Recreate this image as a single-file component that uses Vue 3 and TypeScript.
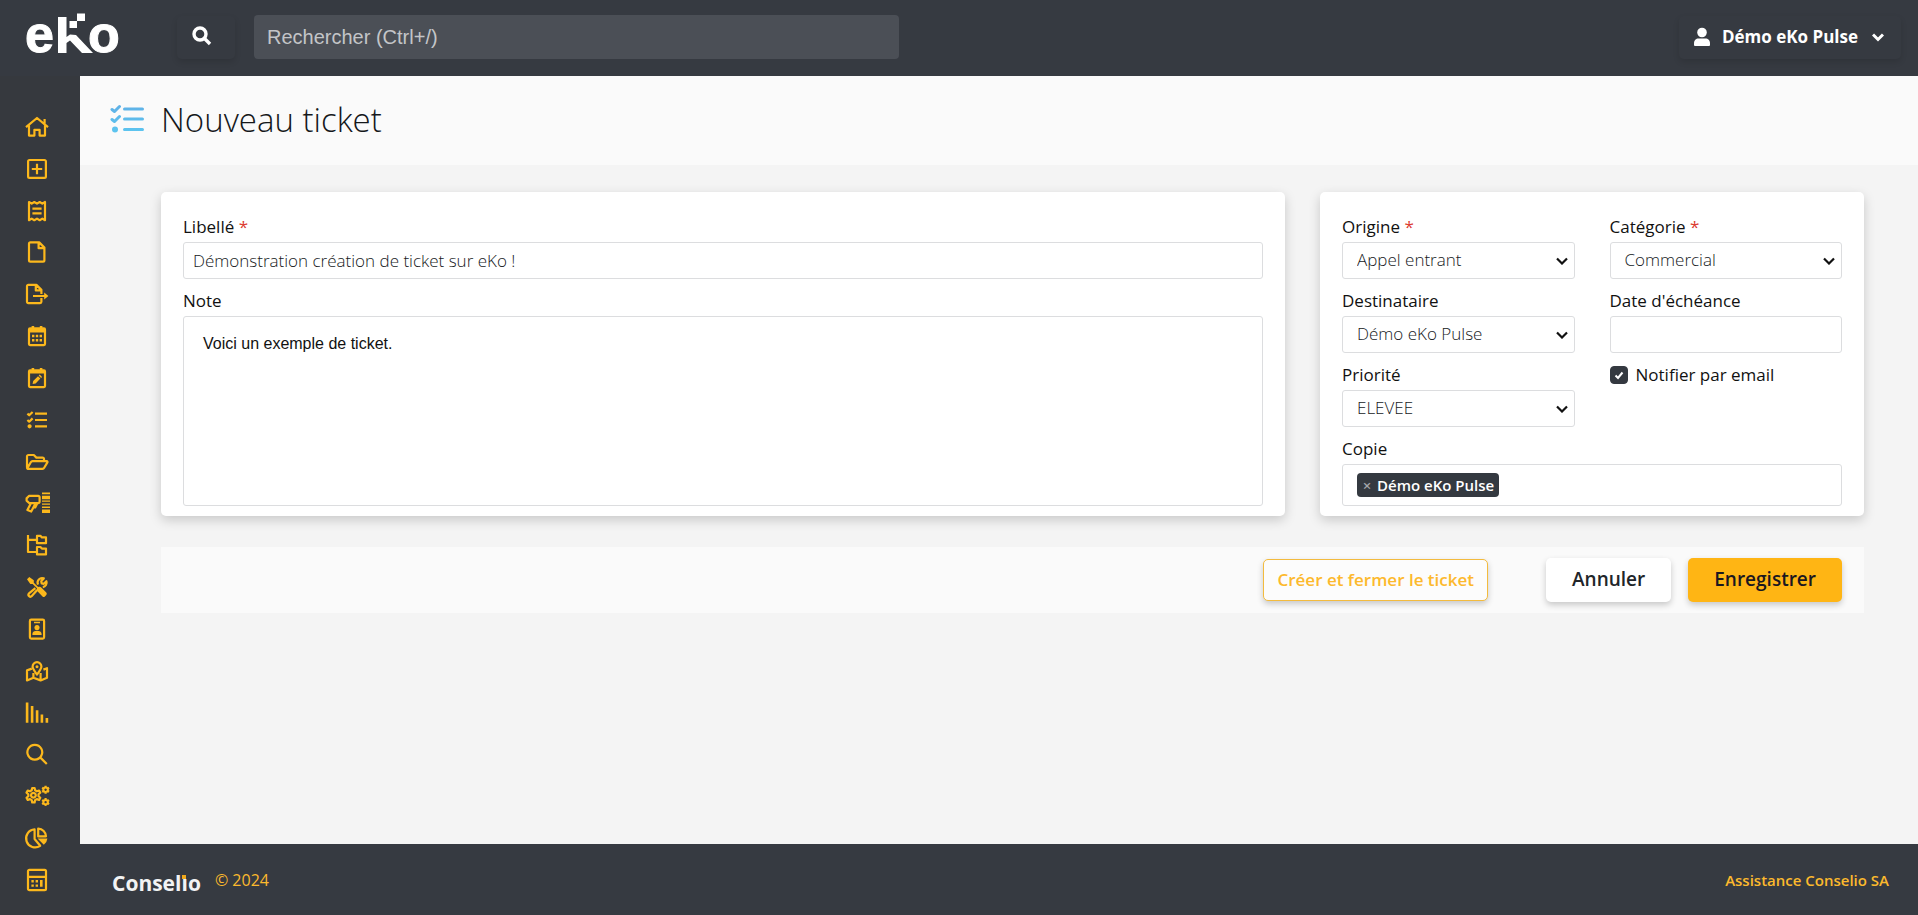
<script setup lang="ts">
import { ref } from 'vue'

interface NavItem {
  name: string
  stroke?: string
  fill?: string
}

const nav: NavItem[] = [
  { name: 'Accueil', stroke: 'M1 12.2 12 3l11 9.2M4 10.5V20.6h5.4v-5.8h5.2v5.8H20V10.5M19.6 4v4.4' },
  { name: 'Ajouter', stroke: 'M4.5 3h15a1.4 1.4 0 0 1 1.4 1.4v15a1.4 1.4 0 0 1-1.4 1.4h-15a1.4 1.4 0 0 1-1.4-1.4v-15A1.4 1.4 0 0 1 4.5 3ZM12 6.8v10.4M6.8 12h10.4' },
  { name: 'Reçus', stroke: 'M4 3l2.7 1.6L9.3 3 12 4.6 14.7 3l2.6 1.6L20 3v18.2l-2.7-1.6-2.6 1.6-2.7-1.6-2.7 1.6-2.6-1.6L4 21.2ZM7.4 9.6h9.2M7.4 14.4h9.2' },
  { name: 'Documents', stroke: 'M5.4 2.4h8.8L19.4 7.6v12.6a1.4 1.4 0 0 1-1.4 1.4H5.4A1.4 1.4 0 0 1 4 20.2V3.8a1.4 1.4 0 0 1 1.4-1.4ZM13.6 2.6v5.6h5.6' },
  { name: 'Exports', stroke: 'M16.4 16v3.8a1.3 1.3 0 0 1-1.3 1.3H3.3A1.3 1.3 0 0 1 2 19.8V4.2a1.3 1.3 0 0 1 1.3-1.3h8.1l5 5V12M10.8 3v5.4h5.4M8 14h12', fill: 'M19.2 10.4 23.4 14l-4.2 3.6Z' },
  { name: 'Calendrier', stroke: 'M5 4.4h14a1 1 0 0 1 1 1v14.7a1 1 0 0 1-1 1H5a1 1 0 0 1-1-1V5.4a1 1 0 0 1 1-1Z', fill: 'M4 4.6h16v4H4ZM6.6 2h2.6v3H6.6ZM14.8 2h2.6v3h-2.6ZM7 10.8h2.4v2.4H7ZM10.8 10.8h2.4v2.4h-2.4ZM14.6 10.8H17v2.4h-2.4ZM7 15h2.4v2.4H7ZM10.8 15h2.4v2.4h-2.4ZM14.6 15H17v2.4h-2.4Z' },
  { name: 'Planification', stroke: 'M5 4.4h14a1 1 0 0 1 1 1v14.7a1 1 0 0 1-1 1H5a1 1 0 0 1-1-1V5.4a1 1 0 0 1 1-1Z', fill: 'M4 4.6h16v3H4ZM6.6 2h2.6v3H6.6ZM14.8 2h2.6v3h-2.6ZM7.6 18l.6-3 4.8-4.8 2.4 2.4-4.8 4.8ZM13.7 9.5l1-1 2.4 2.4-1 1Z' },
  { name: 'Tickets', stroke: 'M2.4 5.6l1.8 1.7L7.6 4M2.4 12l1.8 1.7L7.6 10.4M10 5.7h12M10 12h12M10 18.3h12', fill: 'M4.6 16.2a2.1 2.1 0 1 0 .001 0Z' },
  { name: 'Dossiers', stroke: 'M2 17.4V6.4A1.4 1.4 0 0 1 3.4 5h5.4l2.6 2.6h6.2A1.4 1.4 0 0 1 19 9v2.2M2.2 18.4l3.6-6.2a2 2 0 0 1 1.7-1h14.2a.8.8 0 0 1 .7 1.2l-3.2 5.4a2 2 0 0 1-1.7 1H2.8a.7.7 0 0 1-.6-1Z' },
  { name: 'Inventaire', stroke: 'M4.2 4.8h9a1.4 1.4 0 0 1 1.4 1.4v4.6a1.4 1.4 0 0 1-1.4 1.4H4.4L1.6 9.6V7.4ZM5.8 12.4 2.4 19l3.8 1.6 4.2-8M8.6 16.4h1.6l2-4', fill: 'M17 1.6h8v1.6h-8ZM17 4.8h8v3.4h-8ZM17 9.6h8v1.2h-8ZM17 12.6h8v1.2h-8ZM17 15.6h8v1.4h-8ZM17 18.4h8v3.6h-8Z' },
  { name: 'Arborescence', stroke: 'M3 2v17h8M3 6.8h8M12 2.8h3.4l1.5 1.6h4.1v5.8h-9ZM12 14h3.4l1.5 1.6h4.1v5.8h-9Z' },
  { name: 'Outils', stroke: 'M10.4 13.2 4 18.4a1.9 1.9 0 0 0 2.8 2.6l5.4-6M13 9.6a4.6 4.6 0 0 1 5.8-6.2l-2.6 2.8.5 2.2 2.1.4 2.6-2.6a4.6 4.6 0 0 1-3.6 6', fill: 'M2 4.2 4.3 2l4.5 3.3v2.4l4.4 4.4c1.4-.6 2.4-.2 3.3.7l4.8 4.8a1.8 1.8 0 0 1 0 2.4l-1.4 1.4a1.8 1.8 0 0 1-2.4 0l-4.8-4.8c-.9-.9-1.3-2-.7-3.3L7.6 8.9H5.3Z' },
  { name: 'Contacts', stroke: 'M6.2 2.6h11.6a1.3 1.3 0 0 1 1.3 1.3v16.4a1.3 1.3 0 0 1-1.3 1.3H6.2a1.3 1.3 0 0 1-1.3-1.3V3.9a1.3 1.3 0 0 1 1.3-1.3Z', fill: 'M9 4.8h6v1.4H9ZM12 8a2.6 2.6 0 1 0 .001 0ZM7.4 18v-1c0-2 1.6-3 3-3h3.2c1.4 0 3 1 3 3v1Z' },
  { name: 'Carte', stroke: 'M12 15.6C9 11.8 7.6 9.9 7.6 7.6a4.4 4.4 0 1 1 8.8 0c0 2.3-1.4 4.2-4.4 8ZM6.8 9.6 2 11.4v10l6.4-2.6 7.2 2.6 6.4-2.6V9.2l-3.6 1.4M8.4 14v4.8M15.6 14v7.4', fill: 'M12 6.2a1.5 1.5 0 1 0 .001 0Z' },
  { name: 'Statistiques', fill: 'M.8 1.4h2.6v20.4H.8ZM5.8 5h2.6v16.8H5.8ZM10.8 9.2h2.6v12.6h-2.6ZM15.6 13.4h2.6v8.4h-2.6ZM20.6 17h2.6v4.8h-2.6Z' },
  { name: 'Recherche', stroke: 'M9.8 2.8a7.4 7.4 0 1 0 .001 0ZM15.2 15.4 21.8 22' },
  { name: 'Paramètres', stroke: 'M7.2 4h2.4l.5 2.3 1.7 1 2.3-.8 1.2 2.1-1.8 1.6v2l1.8 1.6-1.2 2.1-2.3-.8-1.7 1-.5 2.3H7.2l-.5-2.3-1.7-1-2.3.8-1.2-2.1 1.8-1.6v-2L1.5 8.6l1.2-2.1 2.3.8 1.7-1ZM8.4 8.8a2.4 2.4 0 1 0 .001 0ZM20.6 3.4a2.3 2.3 0 1 0 .001 0ZM20.6 15.8a2.3 2.3 0 1 0 .001 0ZM20.6 1.7v1.4M20.6 8.3v1.4M24.1 3.7l-1.2.7M17.1 3.7l1.2.7M24.1 7.7l-1.2-.7M17.1 7.7l1.2-.7M20.6 14.1v1.4M20.6 20.7v1.4M24.1 16.1l-1.2.7M17.1 16.1l1.2.7M24.1 20.1l-1.2-.7M17.1 20.1l1.2-.7' },
  { name: 'Rapports', stroke: 'M9.6 3.4a9 9 0 1 0 5.6 16.4L9.6 13ZM13.2 2.6a8 8 0 0 1 7.8 7.8h-7.8Z', fill: 'M12.6 12.4h9.8a9 9 0 0 1-3.6 6.4Z' },
  { name: 'Calculatrice', stroke: 'M4.4 1.8h15.2A1.4 1.4 0 0 1 21 3.2v17.6a1.4 1.4 0 0 1-1.4 1.4H4.4A1.4 1.4 0 0 1 3 20.8V3.2a1.4 1.4 0 0 1 1.4-1.4ZM3 8.8h18', fill: 'M6.4 12h2.4v2.4H6.4ZM10.6 12H13v2.4h-2.4ZM6.4 16.4h2.4v2.4H6.4ZM10.6 16.4H13v2.4h-2.4ZM15 12h2.6v6.8H15Z' },
]

const search = ref('')
const label = ref('Démonstration création de ticket sur eKo !')
const note = ref('Voici un exemple de ticket.')
const origin = ref('Appel entrant')
const category = ref('Commercial')
const recipient = ref('Démo eKo Pulse')
const dueDate = ref('')
const priority = ref('ELEVEE')
const notify = ref(true)
const copies = ref<string[]>(['Démo eKo Pulse'])

function removeCopy(name: string) {
  copies.value = copies.value.filter((c) => c !== name)
}
</script>

<template>
  <div class="app">
    <header class="topbar">
      <a href="#" class="brand" aria-label="eKo">
        <svg class="brand-logo" viewBox="0 -7 98 60" aria-hidden="true">
          <text class="brand-letter" x="0" y="40">e</text>
          <path d="M33 5h8.500v20l3.500-2.500 6 .5 17 18H57L45 28.500 41.500 31v10H33Z" />
          <path d="M44.500 9H52v7h-7.500ZM52 1.500h8V9h-8Z" />
          <text class="brand-letter" x="63" y="40">o</text>
        </svg>
      </a>
      <button type="button" class="search-toggle" aria-label="Rechercher">
        <svg viewBox="0 0 20 20" class="icon-search"><circle cx="8" cy="8" r="6" /><path d="M12.500 12.500 18 18" /></svg>
      </button>
      <input v-model="search" class="search" type="search" placeholder="Rechercher (Ctrl+/)" aria-label="Recherche" />
      <button type="button" class="user">
        <svg viewBox="0 0 16 20" class="icon-user"><circle cx="8" cy="5.500" r="4.800" /><path d="M0 18v-1.500C0 13 2 11.500 4.500 11.500h7c2.500 0 4.500 1.500 4.500 5V18a1 1 0 0 1-1 1H1a1 1 0 0 1-1-1Z" /></svg>
        <span>Démo eKo Pulse</span>
        <svg viewBox="0 0 12 10" class="icon-chevron"><path d="M1 2.500 6 7.500l5-5" /></svg>
      </button>
    </header>

    <div class="body">
      <nav class="sidebar" aria-label="Navigation principale">
        <a v-for="item in nav" :key="item.name" href="#" class="nav-link" :aria-label="item.name">
          <svg viewBox="0 0 24 24" class="nav-icon">
            <path v-if="item.stroke" class="line" :d="item.stroke" />
            <path v-if="item.fill" class="solid" :d="item.fill" />
          </svg>
        </a>
      </nav>

      <div class="page">
        <div class="titlebar">
          <svg viewBox="0 0 34 30" class="title-icon">
            <defs>
              <linearGradient id="title-gradient" gradientUnits="userSpaceOnUse" x1="0" y1="0" x2="0" y2="30">
                <stop offset="0" stop-color="#5fb0e6" />
                <stop offset="1" stop-color="#5cc6f0" />
              </linearGradient>
            </defs>
            <g fill="none" stroke="url(#title-gradient)" stroke-width="3" stroke-linecap="round" stroke-linejoin="round">
              <path d="M2 5.500 4.500 7.500 9.500 2.500M2 15.500 4.500 17.500 9.500 12.500M14.500 5h18M14.500 15h18M14.500 25.500h18" />
            </g>
            <circle cx="5" cy="25.500" r="3" fill="url(#title-gradient)" />
          </svg>
          <h1>Nouveau ticket</h1>
        </div>

        <form class="content" @submit.prevent>
          <div class="cards">
            <section class="card main-card">
              <div class="field">
                <label for="label">Libellé <span class="required">*</span></label>
                <input id="label" v-model="label" class="control" type="text" required />
              </div>
              <div class="field grow">
                <label for="note">Note</label>
                <textarea id="note" v-model="note" class="control note"></textarea>
              </div>
            </section>

            <section class="card side-card">
              <div class="field">
                <label for="origin">Origine <span class="required">*</span></label>
                <select id="origin" v-model="origin" class="control"><option>Appel entrant</option></select>
              </div>
              <div class="field">
                <label for="category">Catégorie <span class="required">*</span></label>
                <select id="category" v-model="category" class="control"><option>Commercial</option></select>
              </div>
              <div class="field">
                <label for="recipient">Destinataire</label>
                <select id="recipient" v-model="recipient" class="control"><option>Démo eKo Pulse</option></select>
              </div>
              <div class="field">
                <label for="due">Date d'échéance</label>
                <input id="due" v-model="dueDate" class="control" type="text" />
              </div>
              <div class="field">
                <label for="priority">Priorité</label>
                <select id="priority" v-model="priority" class="control"><option>ELEVEE</option></select>
              </div>
              <div class="check">
                <span class="box">
                  <input id="notify" v-model="notify" type="checkbox" />
                  <svg v-if="notify" viewBox="0 0 18 18"><path d="M5.500 9.500 8 12l4.500-5.500" /></svg>
                </span>
                <label for="notify">Notifier par email</label>
              </div>
              <div class="field wide">
                <label for="copy">Copie</label>
                <div class="control tags">
                  <span v-for="c in copies" :key="c" class="tag">
                    <button type="button" :aria-label="'Retirer ' + c" @click="removeCopy(c)">×</button>{{ c }}
                  </span>
                  <input id="copy" type="text" />
                </div>
              </div>
            </section>
          </div>

          <div class="actions">
            <button type="button" class="btn outline">Créer et fermer le ticket</button>
            <button type="button" class="btn plain">Annuler</button>
            <button type="submit" class="btn primary">Enregistrer</button>
          </div>
        </form>

        <footer class="footer">
          <span class="conselio">Consel<span class="dotted">ı</span>o</span>
          <span class="year">© 2024</span>
          <a href="#">Assistance Conselio SA</a>
        </footer>
      </div>
    </div>
  </div>
</template>

<style>
body {
  margin: 0;
  background: #f4f4f4;
}
</style>

<style scoped>
* {
  box-sizing: border-box;
}
.app {
  min-height: 100vh;
  display: flex;
  flex-direction: column;
  font-family: 'Open Sans', 'Noto Sans', sans-serif;
  font-size: 17px;
  line-height: 24px;
  color: #212529;
}
button,
input,
select,
textarea {
  font: inherit;
  color: inherit;
}
button {
  cursor: pointer;
}
.topbar {
  display: flex;
  align-items: center;
  height: 76px;
  padding: 0 17px 2px 25px;
  background: #363a41;
}
.brand {
  display: flex;
  width: 152px;
}
.brand-logo {
  width: 98px;
  height: 60px;
  margin-bottom: 4px;
  fill: #fff;
}
.brand-letter {
  font: bold 52px 'Liberation Sans', Arial, sans-serif;
  stroke: #fff;
  stroke-width: 1;
}
.search-toggle,
.user {
  display: flex;
  align-items: center;
  height: 43px;
  border: 0;
  border-radius: 5px;
  background: transparent;
  color: #fff;
  box-shadow: 0 3px 6px rgba(0, 0, 0, 0.12);
}
.search-toggle {
  width: 58px;
  padding: 0 0 2px 15px;
}
.icon-search {
  width: 20px;
  height: 20px;
  fill: none;
  stroke: #fff;
  stroke-width: 3.4;
}
.search {
  width: 645px;
  height: 44px;
  margin-left: 19px;
  padding: 0 13px;
  border: 0;
  border-radius: 4px;
  background: #4b4f56;
  color: #fff;
  font: 20px 'Liberation Sans', Arial, sans-serif;
}
.search::placeholder {
  color: #c3c5c8;
}
.user {
  margin-left: auto;
  padding: 0 17px 0 15px;
  font-weight: 700;
}
.icon-user {
  width: 16px;
  height: 20px;
  margin-right: 12px;
  fill: #fff;
}
.icon-chevron {
  width: 12px;
  height: 10px;
  margin-left: 14px;
  fill: none;
  stroke: #fff;
  stroke-width: 3;
}
.body {
  flex: 1;
  display: flex;
}
.sidebar {
  display: flex;
  flex-direction: column;
  justify-content: space-between;
  width: 80px;
  padding: 31px 6px 15px 0;
  background: #36393e;
}
.nav-link {
  display: flex;
  align-items: center;
  justify-content: center;
  height: 40px;
}
.nav-icon {
  width: 24px;
  height: 24px;
  overflow: visible;
}
.line {
  fill: none;
  stroke: #fcb81c;
  stroke-width: 2.2;
  stroke-linejoin: round;
}
.solid {
  fill: #fcb81c;
}
.page {
  flex: 1;
  min-width: 0;
  display: flex;
  flex-direction: column;
  background: #f4f4f4;
}
.titlebar {
  display: flex;
  align-items: center;
  gap: 17px;
  height: 89px;
  padding: 0 30px 2px;
  background: #fafafa;
}
.title-icon {
  width: 34px;
  height: 30px;
  margin-bottom: 2px;
}
h1 {
  margin: 0;
  color: #15181b;
  font-size: 33px;
  line-height: 40px;
  font-weight: 300;
}
.content {
  flex: 1;
  padding: 27px 54px 27px 81px;
}
.cards {
  display: grid;
  grid-template-columns: 1124fr 544fr;
  gap: 35px;
}
.card {
  padding: 13px 22px 10px;
  border-radius: 5px;
  background: #fff;
  box-shadow: 0 4px 12px rgba(0, 0, 0, 0.18);
}
.main-card {
  display: flex;
  flex-direction: column;
}
.side-card {
  display: grid;
  grid-template-columns: 1fr 1fr;
  column-gap: 35px;
}
.field {
  display: flex;
  flex-direction: column;
}
.grow {
  flex: 1;
}
.wide {
  grid-column: 1 / -1;
}
.field > label {
  padding: 10px 0 3px;
  color: #111;
}
.required {
  color: #dc3b30;
}
.control {
  width: 100%;
  height: 37px;
  padding: 0 9px 1px;
  border: 1px solid #dcdddf;
  border-radius: 3px;
  background: #fff;
  color: #16191c;
  font-weight: 300;
}
select.control {
  appearance: none;
  padding: 0 24px 1px 14px;
  background: #fff url("data:image/svg+xml,%3Csvg xmlns='http://www.w3.org/2000/svg' viewBox='0 0 12 8'%3E%3Cpath d='M1 1.500 6 6.500 11 1.500' fill='none' stroke='%23111' stroke-width='2.200'/%3E%3C/svg%3E") no-repeat right 6px center / 12px 8px;
}
.note {
  flex: 1;
  min-height: 188px;
  padding: 15px 19px;
  resize: none;
  display: block;
  color: #111;
  font: 16px/24px 'Liberation Sans', Arial, sans-serif;
}
.check {
  display: flex;
  align-items: center;
  align-self: start;
  gap: 8px;
  padding-top: 10px;
  color: #111;
}
.box {
  position: relative;
  width: 18px;
  height: 18px;
}
.box input {
  appearance: none;
  display: block;
  width: 18px;
  height: 18px;
  margin: 0;
  border: 1px solid #343940;
  border-radius: 4px;
  background: #fff;
}
.box input:checked {
  background: #343940;
}
.box svg {
  position: absolute;
  inset: 0;
  fill: none;
  stroke: #fff;
  stroke-width: 2;
  pointer-events: none;
}
.tags {
  display: flex;
  align-items: center;
  height: 42px;
  padding: 0 14px;
}
.tag {
  display: flex;
  align-items: center;
  height: 24px;
  padding: 0 5px;
  border-radius: 4px;
  background: #343940;
  color: #fff;
  font-size: 15px;
  font-weight: 600;
}
.tag button {
  width: 15px;
  padding: 0 5px 0 0;
  border: 0;
  background: none;
  color: #a3a6aa;
  line-height: 20px;
}
.tags input {
  flex: 1;
  min-width: 0;
  border: 0;
  outline: 0;
  background: none;
}
.actions {
  display: flex;
  align-items: center;
  justify-content: flex-end;
  height: 66px;
  margin-top: 31px;
  padding: 0 22px;
  background: #fafafa;
}
.btn {
  height: 44px;
  padding: 0 26px 2px;
  border: 0;
  border-radius: 5px;
  font-size: 19px;
  font-weight: 600;
  box-shadow: 0 3px 6px rgba(0, 0, 0, 0.2);
}
.outline {
  height: 42px;
  padding: 0 13px;
  margin-right: 58px;
  border: 1px solid #f3bb3e;
  background: #fcfcfc;
  color: #fcb92d;
  font-size: 17px;
}
.plain {
  margin-right: 17px;
  background: #fff;
}
.primary {
  background: #ffb514;
  color: #1b1720;
}
.footer {
  display: flex;
  align-items: center;
  height: 71px;
  padding: 0 29px 0 32px;
  background: #363a41;
  color: #fcb92d;
  font-size: 15px;
}
.conselio {
  margin-right: 14px;
  padding-top: 6px;
  color: #f2f3f4;
  font-size: 21px;
  font-weight: 700;
}
.year {
  font-size: 16px;
}
.dotted {
  position: relative;
}
.dotted::after {
  content: '';
  position: absolute;
  left: 1px;
  top: 6px;
  width: 4px;
  height: 4px;
  background: #f0a81c;
}
.footer a {
  margin-left: auto;
  color: inherit;
  font-weight: 600;
  text-decoration: none;
}
</style>
